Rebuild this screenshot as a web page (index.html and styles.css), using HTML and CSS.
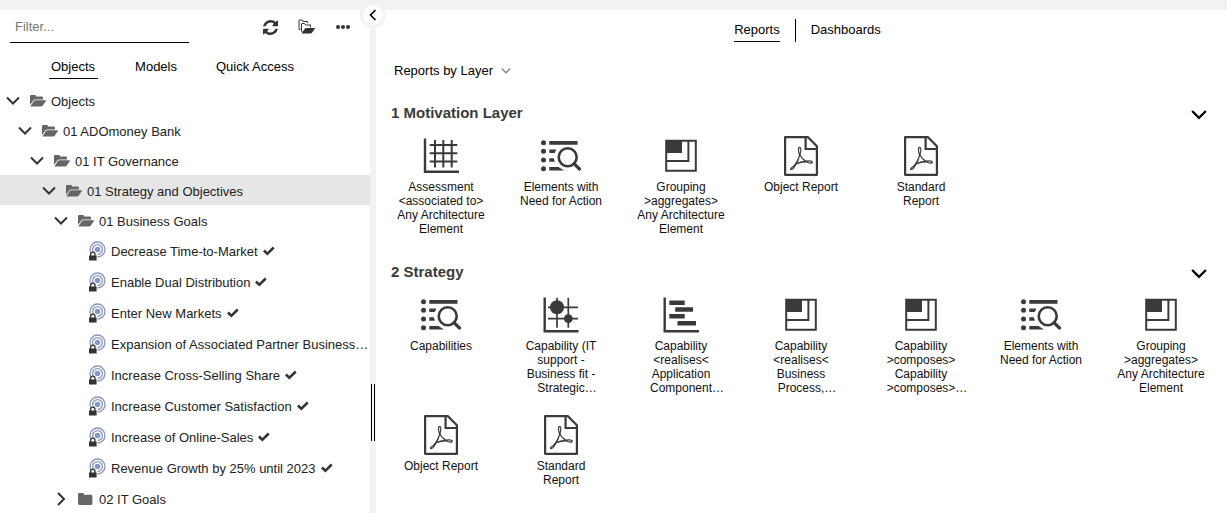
FILE: index.html
```html
<!DOCTYPE html>
<html lang="en">
<head>
<meta charset="utf-8">
<title>Reports</title>
<link rel="stylesheet" href="styles.css">
</head>
<body>
<svg class="sprite" aria-hidden="true">
  <symbol id="down" viewBox="0 0 14 14"><path d="M1 3.5 7 9.5 13 3.5" fill="none" stroke="currentColor" stroke-width="2"/></symbol>
  <symbol id="right" viewBox="0 0 14 14"><path d="M4 1 10 7 4 13" fill="none" stroke="currentColor" stroke-width="2"/></symbol>
  <symbol id="folder-open" viewBox="0 0 16 12"><path d="M0 10V1.2Q0 0 1.2 0H4.8Q6 0 6 1.2V1.6H11.8Q13 1.6 13 2.8V4.6H5.4Q4 4.6 3 5.8Z"/><path d="M.4 11.5 3.7 6.2Q4.4 5.2 5.8 5.2H15.3Q16.2 5.2 15.7 6.2L12.8 10.6Q12.2 11.5 11 11.5Z"/></symbol>
  <symbol id="folder" viewBox="0 0 16 12"><path d="M0 1.4Q0 0 1.4 0H4.8Q6 0 6 1.4V1.8H13Q14.4 1.8 14.4 3V10.6Q14.4 12 13 12H1.4Q0 12 0 10.6Z"/></symbol>
  <symbol id="goal" viewBox="0 0 18 20"><g fill="none" stroke="#8797c0" stroke-width="1.3"><circle cx="9.5" cy="8.5" r="7.5"/><circle cx="9.5" cy="8.5" r="4.9"/></g><circle cx="9.5" cy="8.5" r="2.8" fill="#8797c0"/><path d="M0 11.5H9.5V20H0Z" fill="#fff"/><path d="M1 14.5H8.6V19.5H1Z" fill="#333"/><path d="M2.6 15V13.4a2.2 2.2 0 0 1 4.4 0V15" fill="none" stroke="#333" stroke-width="1.3"/></symbol>
  <symbol id="check" viewBox="0 0 12 10"><path d="M0 5.4 1.8 3.6 4.4 6.1 9.8.6 11.6 2.4 4.4 9.6Z"/></symbol>
  <symbol id="refresh" viewBox="0 0 1536 1536"><path d="M1511 928q0 5-1 7-64 268-268 434.500t-478 166.500q-146 0-282.500-55t-243.500-157l-129 129q-19 19-45 19t-45-19-19-45v-448q0-26 19-45t45-19h448q26 0 45 19t19 45-19 45l-137 137q71 66 161 102t187 36q134 0 250-65t186-179q11-17 53-117 8-23 30-23h192q13 0 22.500 9.500t9.500 22.500zm25-800v448q0 26-19 45t-45 19h-448q-26 0-45-19t-19-45 19-45l138-138q-148-137-349-137-134 0-250 65t-186 179q-11 17-53 117-8 23-30 23h-199q-13 0-22.500-9.500t-9.500-22.500v-7q65-268 270-434.500t480-166.500q146 0 284 55.500t245 156.500l130-129q19-19 45-19t45 19 19 45z"/></symbol>
  <symbol id="folders" viewBox="0 0 18 16"><g fill="none" stroke="#333" stroke-width="1"><path d="M2.500 10.500H1V1.500Q1 1 1.500 1H4L5 2.500H9.500V4"/><path d="M4.500 13.500 3.500 12V5Q3.500 4.500 4 4.500H6.500L7.500 6H12.500V8.500"/></g><path d="M3.500 14.500 7 9.500Q7.400 9 8 9H17.200L14 13.800Q13.500 14.500 12.700 14.500Z"/></symbol>
  <symbol id="dots" viewBox="0 0 14 4"><circle cx="2" cy="2" r="2"/><circle cx="7" cy="2" r="2"/><circle cx="12" cy="2" r="2"/></symbol>
  <symbol id="matrix" viewBox="0 0 40 40"><path d="M4 2.500V35.700H38" fill="none" stroke="currentColor" stroke-width="2.400"/><path d="M14 4V31.500M22.300 4V31.500M30.700 4V31.500M8.700 9H36.300M8.700 17.300H36.300M8.700 25.500H36.300" stroke="currentColor" stroke-width="2"/></symbol>
  <symbol id="list" viewBox="0 0 40 40"><circle cx="2.500" cy="6.700" r="2.500"/><circle cx="2.500" cy="15.300" r="2.500"/><circle cx="2.500" cy="24" r="2.500"/><circle cx="2.500" cy="32.700" r="2.500"/><path d="M8.300 5H36.500V8.700H8.300ZM8.300 13.500H15.300L13.700 17H8.300ZM8.300 22.200H12.800L13.800 25.700H8.300ZM8.300 31H17.500L23 34.500H8.300Z"/><circle cx="26.700" cy="21.300" r="9" fill="none" stroke="currentColor" stroke-width="2.600"/><path d="M33 27.600 38.500 33" stroke="currentColor" stroke-width="3.200" stroke-linecap="round"/></symbol>
  <symbol id="group" viewBox="0 0 40 40"><path d="M5.200 4.700H34.800V34.800H5.200ZM5 25H27.400V5" fill="none" stroke="currentColor" stroke-width="2"/><path d="M5 4.500H21V17H5Z"/></symbol>
  <symbol id="bubble" viewBox="0 0 40 40"><path d="M3.700 2.500V36.200H37.500" fill="none" stroke="currentColor" stroke-width="2.400"/><path d="M16 2.700V32.700M27.300 2.700V32.700M7 12.300H37M7 23.700H37" stroke="currentColor" stroke-width="1.700"/><circle cx="16" cy="12.300" r="7"/><circle cx="27.300" cy="23.700" r="4.400"/></symbol>
  <symbol id="gantt" viewBox="0 0 40 40"><path d="M3.700 2.500V36.200H38" fill="none" stroke="currentColor" stroke-width="2.400"/><path d="M8.300 5.400H23.700V10H8.300ZM14.200 12.200H32V16.800H14.200ZM8.300 19H23.700V23.600H8.300ZM16.500 26H35V30.600H16.500Z"/></symbol>
  <symbol id="pdf" viewBox="0 0 40 40"><g fill="none" stroke="currentColor"><path d="M4.100 1.200H27L35.900 10.200V38.800H4.100Z" stroke-width="2.200" stroke-linejoin="round"/><path d="M24.600 1.500V13H36" stroke-width="2.200"/><path d="M18.700 11.300C16.900 11.300 17.300 16 18.700 19 17.800 23 14.500 28.500 12.300 30.500 9.500 32 8.800 33.600 10.200 33.600 12.200 33.400 14.200 29.600 15.300 27.800 18 26.800 23 25.900 25.500 26 28.500 27.400 31.500 27.400 31.300 26.200 31 24.800 27.500 24.800 25 25.200 22 23.600 19.700 20.500 19 18.500 20.200 15 20.200 11.400 18.700 11.300ZM18.700 19C18 22 16 26.500 14.600 28.200M24.600 25.400C21.500 25.600 17.500 26.600 14.800 27.800" stroke-width="1.200"/></g></symbol>
</svg>

<div class="app">
  <div class="topbar"></div>
  <div class="workspace">
    <aside class="explorer">
      <div class="toolbar">
        <input class="filter" type="text" placeholder="Filter..." aria-label="Filter">
        <div class="tools">
          <button class="tool" aria-label="Refresh"><svg class="i-refresh"><use href="#refresh"/></svg></button>
          <button class="tool" aria-label="Open folders"><svg class="i-folders"><use href="#folders"/></svg></button>
          <button class="tool" aria-label="More"><svg class="i-dots"><use href="#dots"/></svg></button>
        </div>
      </div>
      <nav class="tabs">
        <button class="tab active">Objects</button>
        <button class="tab">Models</button>
        <button class="tab">Quick Access</button>
      </nav>
      <ul class="tree">
        <li class="row l0"><button class="toggle" aria-label="Collapse"><svg><use href="#down"/></svg></button><svg class="fold"><use href="#folder-open"/></svg><span class="name">Objects</span></li>
        <li class="row l1"><button class="toggle" aria-label="Collapse"><svg><use href="#down"/></svg></button><svg class="fold"><use href="#folder-open"/></svg><span class="name">01 ADOmoney Bank</span></li>
        <li class="row l2"><button class="toggle" aria-label="Collapse"><svg><use href="#down"/></svg></button><svg class="fold"><use href="#folder-open"/></svg><span class="name">01 IT Governance</span></li>
        <li class="row l3 selected"><button class="toggle" aria-label="Collapse"><svg><use href="#down"/></svg></button><svg class="fold"><use href="#folder-open"/></svg><span class="name">01 Strategy and Objectives</span></li>
        <li class="row l4"><button class="toggle" aria-label="Collapse"><svg><use href="#down"/></svg></button><svg class="fold"><use href="#folder-open"/></svg><span class="name">01 Business Goals</span></li>
        <li class="row leaf"><svg class="goal"><use href="#goal"/></svg><span class="name">Decrease Time-to-Market</span><svg class="check"><use href="#check"/></svg></li>
        <li class="row leaf"><svg class="goal"><use href="#goal"/></svg><span class="name">Enable Dual Distribution</span><svg class="check"><use href="#check"/></svg></li>
        <li class="row leaf"><svg class="goal"><use href="#goal"/></svg><span class="name">Enter New Markets</span><svg class="check"><use href="#check"/></svg></li>
        <li class="row leaf"><svg class="goal"><use href="#goal"/></svg><span class="name">Expansion of Associated Partner Business…</span></li>
        <li class="row leaf"><svg class="goal"><use href="#goal"/></svg><span class="name">Increase Cross-Selling Share</span><svg class="check"><use href="#check"/></svg></li>
        <li class="row leaf"><svg class="goal"><use href="#goal"/></svg><span class="name">Increase Customer Satisfaction</span><svg class="check"><use href="#check"/></svg></li>
        <li class="row leaf"><svg class="goal"><use href="#goal"/></svg><span class="name">Increase of Online-Sales</span><svg class="check"><use href="#check"/></svg></li>
        <li class="row leaf"><svg class="goal"><use href="#goal"/></svg><span class="name">Revenue Growth by 25% until 2023</span><svg class="check"><use href="#check"/></svg></li>
        <li class="row l4"><button class="toggle" aria-label="Expand"><svg><use href="#right"/></svg></button><svg class="fold"><use href="#folder"/></svg><span class="name">02 IT Goals</span></li>
      </ul>
    </aside>

    <div class="splitter">
      <button class="collapse" aria-label="Collapse panel"><svg viewBox="0 0 8 12"><path d="M6.500 1 1.500 6 6.500 11" fill="none" stroke="#000" stroke-width="1.600"/></svg></button>
      <div class="grip"></div>
    </div>

    <main class="content">
      <nav class="views">
        <button class="view active">Reports</button>
        <span class="divider"></span>
        <button class="view">Dashboards</button>
      </nav>
      <div class="picker">
        <select class="grouping" aria-label="Grouping"><option>Reports by Layer</option></select>
        <svg class="caret"><use href="#down"/></svg>
      </div>

      <section>
        <header class="heading"><h2>1 Motivation Layer</h2><button class="fold-section" aria-label="Collapse section"><svg><use href="#down"/></svg></button></header>
        <div class="grid">
          <button class="report"><svg><use href="#matrix"/></svg><span class="label">Assessment &lt;associated to&gt; Any Architecture Element</span></button>
          <button class="report"><svg><use href="#list"/></svg><span class="label">Elements with Need for Action</span></button>
          <button class="report"><svg><use href="#group"/></svg><span class="label">Grouping &gt;aggregates&gt; Any Architecture Element</span></button>
          <button class="report"><svg><use href="#pdf"/></svg><span class="label">Object Report</span></button>
          <button class="report"><svg><use href="#pdf"/></svg><span class="label">Standard<br>Report</span></button>
        </div>
      </section>

      <section>
        <header class="heading"><h2>2 Strategy</h2><button class="fold-section" aria-label="Collapse section"><svg><use href="#down"/></svg></button></header>
        <div class="grid">
          <button class="report"><svg><use href="#list"/></svg><span class="label">Capabilities</span></button>
          <button class="report"><svg><use href="#bubble"/></svg><span class="label">Capability (IT support - Business fit - <span class="cut">Strategic…</span></span></button>
          <button class="report"><svg><use href="#gantt"/></svg><span class="label">Capability &lt;realises&lt; Application <span class="cut">Component…</span></span></button>
          <button class="report"><svg><use href="#group"/></svg><span class="label">Capability &lt;realises&lt; Business <span class="cut">Process,…</span></span></button>
          <button class="report"><svg><use href="#group"/></svg><span class="label">Capability &gt;composes&gt; Capability <span class="cut">&gt;composes&gt;…</span></span></button>
          <button class="report"><svg><use href="#list"/></svg><span class="label">Elements with Need for Action</span></button>
          <button class="report"><svg><use href="#group"/></svg><span class="label">Grouping &gt;aggregates&gt; Any Architecture Element</span></button>
          <button class="report"><svg><use href="#pdf"/></svg><span class="label">Object Report</span></button>
          <button class="report"><svg><use href="#pdf"/></svg><span class="label">Standard<br>Report</span></button>
        </div>
      </section>
    </main>
  </div>
</div>
</body>
</html>
```
FILE: styles.css
```css
* { box-sizing: border-box; }
body {
  margin: 0;
  font: 13px/16px "Liberation Sans", Arial, sans-serif;
  color: #000;
  background: #fff;
  overflow: hidden;
}
button, input, select { font: inherit; color: inherit; background: none; border: 0; border-radius: 0; padding: 0; margin: 0; }
button { cursor: pointer; }
svg { display: block; flex: none; fill: currentColor; }
.sprite { display: none; }

.app { display: flex; flex-direction: column; height: 100vh; }
.topbar { flex: none; height: 10px; background: #f2f2f2; }
.workspace { display: flex; flex: 1; min-height: 0; }

.explorer { flex: none; width: 370px; overflow: hidden; }
.toolbar { display: flex; justify-content: space-between; height: 34px; padding: 0 20px 0 10px; }
.filter { width: 179px; height: 33px; padding: 0 5px; border-bottom: 1px solid #000; outline: 0; }
.filter::placeholder { color: #757575; opacity: 1; }
.tools { display: flex; align-items: center; gap: 20px; color: #333; }
.tool { display: flex; align-items: center; }
.i-refresh { width: 15px; height: 15px; }
.i-folders { width: 18px; height: 16px; }
.i-dots { width: 14px; height: 4px; }
.tabs { display: flex; gap: 35px; padding: 13px 49px 6px; }
.tab { padding: 2px 2px 3px; border-bottom: 1px solid transparent; white-space: nowrap; }
.tab.active { padding-right: 3px; border-color: #000; }

.tree { list-style: none; margin: 0; padding: 0; color: #222; }
.row { display: flex; align-items: center; height: 30px; padding-top: 1px; white-space: nowrap; }
.name { padding-top: 2px; }
.toggle { margin-right: 10px; color: #333; }
.toggle svg { width: 14px; height: 14px; }
.fold { width: 16px; height: 12px; margin-right: 5px; color: #666; }
.l0 { padding-left: 6px; }
.l1 { padding-left: 18px; }
.l2 { padding-left: 30px; }
.l3 { padding-left: 42px; }
.l4 { padding-left: 54px; }
.selected { background: #e6e6e6; }
.leaf { height: 31px; padding-left: 88px; }
.goal { width: 18px; height: 20px; margin-right: 5px; }
.check { width: 12px; height: 10px; margin-left: 5px; color: #333; }

.splitter { position: relative; flex: none; display: flex; align-items: center; width: 6px; background: #f2f2f2; }
.collapse {
  position: absolute; top: -8px; left: -10px;
  display: flex; align-items: center; justify-content: center;
  width: 26px; height: 26px;
  border: 3px solid #f2f2f2; border-radius: 50%; background: #fff;
}
.collapse svg { width: 8px; height: 12px; }
.grip { width: 4px; height: 57px; margin: 301px 1px 0; border: solid #000; border-width: 0 1px; }

.content { flex: 1; min-width: 0; overflow: hidden; padding-left: 5px; }
.views { display: flex; justify-content: center; align-items: flex-start; gap: 15px; padding: 9px 0 0 7px; }
.view { padding: 3px 0; border-bottom: 1px solid transparent; }
.view.active { border-color: #000; }
.divider { width: 1px; height: 23px; background: #000; }
.picker { display: flex; align-items: center; gap: 8px; padding: 21px 0 14px 13px; }
.grouping { appearance: none; height: 16px; }
.caret { width: 10px; height: 10px; color: #888; }

.heading { display: flex; align-items: center; justify-content: space-between; height: 39px; padding: 0 20px 0 10px; }
h2 { margin: 0; font-size: 15px; line-height: 18px; color: #3a3a3a; }
.fold-section { padding-top: 4px; }
.fold-section svg { width: 16px; height: 16px; }
.grid { display: grid; grid-template-columns: repeat(auto-fill, 120px); grid-auto-rows: 120px; }
.report {
  display: flex; flex-direction: column; align-items: center; gap: 4px;
  padding-top: 4px; color: #3a3a3a; font-size: 12px; line-height: 14px;
}
.report svg { width: 40px; height: 40px; }
.label { width: 90px; color: #111; }
.cut { margin-right: -12px; }
```
